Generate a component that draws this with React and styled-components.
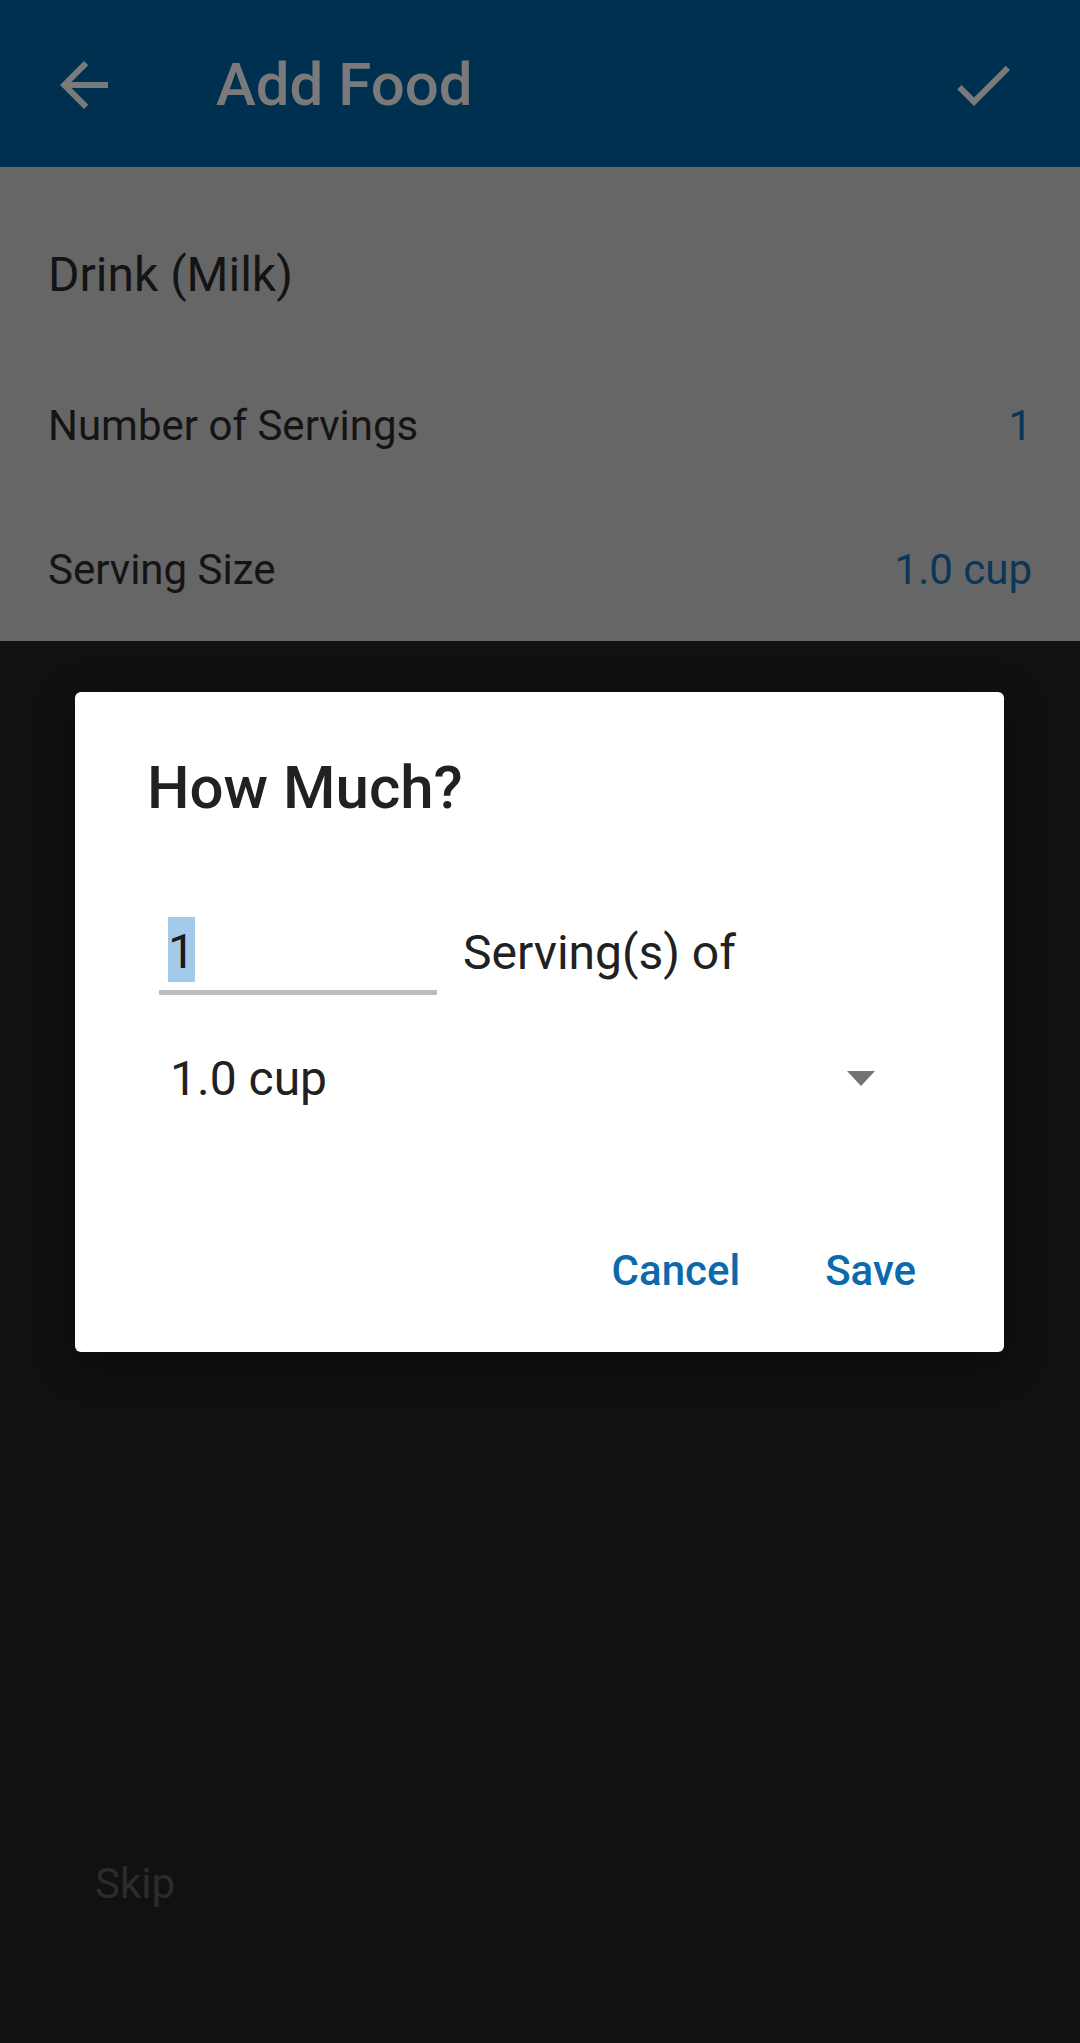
import React from "react";
import styled, { createGlobalStyle } from "styled-components";

const GlobalStyle = createGlobalStyle`
  html, body {
    margin: 0;
    padding: 0;
    background: #111111;
  }
  * { box-sizing: border-box; }
`;

const Page = styled.div`
  position: relative;
  width: 1080px;
  height: 2043px;
  display: flex;
  flex-direction: column;
  background: #111111;
  font-family: Roboto, "Liberation Sans", sans-serif;
  overflow: hidden;
`;

const AppBar = styled.header`
  height: 167px;
  flex: 0 0 auto;
  display: flex;
  align-items: center;
  padding: 2px 61px 0 48px;
  background: #00304f;
`;

const IconButton = styled.div`
  width: 72px;
  height: 72px;
  display: flex;
  align-items: center;
  justify-content: center;
  color: #7a7a7a;
  svg { width: 72px; height: 72px; display: block; }
`;

const AppTitle = styled.h1`
  flex: 1;
  margin: 0 0 0 96px;
  font-family: Roboto, "Liberation Sans", sans-serif;
  font-weight: 500;
  font-size: 60px;
  line-height: 72px;
  color: #7a7a7a;
`;

const Content = styled.section`
  flex: 0 0 auto;
  height: 474px;
  padding: 28px 48px 0 48px;
  background: #666666;
  display: flex;
  flex-direction: column;
`;

const FoodName = styled.div`
  height: 158px;
  display: flex;
  align-items: center;
  font-size: 48px;
  color: #141414;
`;

const Row = styled.div`
  height: 144px;
  display: flex;
  align-items: center;
  justify-content: space-between;
  font-size: 42px;
`;

const RowLabel = styled.span`
  color: #141414;
`;

const RowValue = styled.span`
  color: #0a3658;
`;

const Backdrop = styled.div`
  flex: 1;
  display: flex;
  flex-direction: column;
  justify-content: flex-end;
`;

const SkipBar = styled.div`
  padding: 0 0 129px 95px;
`;

const SkipText = styled.span`
  font-size: 42px;
  line-height: 60px;
  color: #2b2b2b;
`;

const Dialog = styled.div`
  position: absolute;
  left: 75px;
  top: 692px;
  width: 929px;
  background: #ffffff;
  border-radius: 6px;
  box-shadow: 0 10px 40px rgba(0, 0, 0, 0.45);
  padding: 56px 0 28px 0;
  display: flex;
  flex-direction: column;
`;

const DialogTitle = styled.h2`
  margin: 0;
  padding-left: 72px;
  font-weight: 500;
  font-size: 60px;
  line-height: 80px;
  color: #212121;
`;

const DialogBody = styled.div`
  padding: 0 72px 0 84px;
  display: flex;
  flex-direction: column;
`;

const InputRow = styled.div`
  margin-top: 89px;
  display: flex;
  align-items: flex-start;
`;

const InputField = styled.div`
  width: 278px;
  padding: 0 0 6px 9px;
  border-bottom: 5px solid #bdbdbd;
  font-size: 48px;
  line-height: 65px;
  color: #1a1a1a;
`;

const Selection = styled.span`
  display: inline-block;
  background: #a3cbe9;
  padding-top: 4px;
  line-height: 61px;
`;

const InputSuffix = styled.span`
  margin-left: 26px;
  font-size: 48px;
  line-height: 65px;
  padding-top: 3px;
  color: #212121;
`;

const Spinner = styled.div`
  margin-top: 35px;
  height: 96px;
  display: flex;
  align-items: center;
  justify-content: space-between;
  padding: 0 57px 0 11px;
  font-size: 48px;
  color: #212121;
`;

const Caret = styled.span`
  width: 0;
  height: 0;
  border-left: 14px solid transparent;
  border-right: 14px solid transparent;
  border-top: 15px solid #747474;
`;

const ButtonBar = styled.div`
  margin-top: 90px;
  display: flex;
  justify-content: flex-end;
  gap: 37px;
  padding-right: 64px;
`;

const TextButton = styled.button`
  height: 108px;
  padding: 0 24px;
  border: none;
  background: transparent;
  font-family: Roboto, "Liberation Sans", sans-serif;
  font-weight: 500;
  font-size: 42px;
  color: #0b6aac;
  cursor: pointer;
`;

const ArrowBack = () => (
  <svg viewBox="0 0 24 24" fill="currentColor" aria-hidden="true">
    <path d="M20 11H7.83l5.59-5.59L12 4l-8 8 8 8 1.41-1.41L7.83 13H20v-2z" />
  </svg>
);

const CheckIcon = () => (
  <svg viewBox="0 0 24 24" fill="currentColor" aria-hidden="true">
    <path d="M9 16.17L4.83 12l-1.42 1.41L9 19 21 7l-1.41-1.41z" />
  </svg>
);

export default function App() {
  return (
    <>
      <GlobalStyle />
      <Page>
        <AppBar>
          <IconButton>
            <ArrowBack />
          </IconButton>
          <AppTitle>Add Food</AppTitle>
          <IconButton>
            <CheckIcon />
          </IconButton>
        </AppBar>
        <Content>
          <FoodName>Drink (Milk)</FoodName>
          <Row>
            <RowLabel>Number of Servings</RowLabel>
            <RowValue>1</RowValue>
          </Row>
          <Row>
            <RowLabel>Serving Size</RowLabel>
            <RowValue>1.0 cup</RowValue>
          </Row>
        </Content>
        <Backdrop>
          <SkipBar>
            <SkipText>Skip</SkipText>
          </SkipBar>
        </Backdrop>
        <Dialog>
          <DialogTitle>How Much?</DialogTitle>
          <DialogBody>
            <InputRow>
              <InputField>
                <Selection>1</Selection>
              </InputField>
              <InputSuffix>Serving(s) of</InputSuffix>
            </InputRow>
            <Spinner>
              <span>1.0 cup</span>
              <Caret />
            </Spinner>
          </DialogBody>
          <ButtonBar>
            <TextButton>Cancel</TextButton>
            <TextButton>Save</TextButton>
          </ButtonBar>
        </Dialog>
      </Page>
    </>
  );
}
